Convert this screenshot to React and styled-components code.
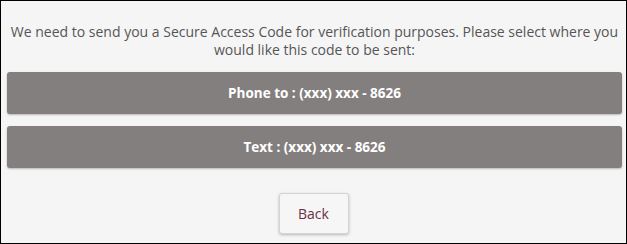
import React from "react";
import styled, { createGlobalStyle } from "styled-components";

const GlobalStyle = createGlobalStyle`
  body {
    margin: 0;
    font-family: "Open Sans", "Liberation Sans", sans-serif;
  }
`;

const Panel = styled.div`
  box-sizing: border-box;
  width: 627px;
  height: 244px;
  border: 1px solid #000;
  background: #f5f5f5;
  padding: 22px 4px 0 6px;
  display: flex;
  flex-direction: column;
  align-items: stretch;
`;

const Message = styled.p`
  margin: 0 0 13px;
  font-size: 14px;
  line-height: 18px;
  color: #555;
  text-align: center;
`;

const OptionList = styled.div`
  display: flex;
  flex-direction: column;
  gap: 12px;
`;

const OptionButton = styled.button`
  height: 42px;
  border: none;
  border-radius: 3px;
  background: #847f7f;
  color: #fff;
  font-family: inherit;
  font-size: 13.5px;
  font-weight: 700;
  box-shadow: 0 1px 2px rgba(0, 0, 0, 0.25);
  cursor: pointer;
`;

const Footer = styled.div`
  display: flex;
  justify-content: center;
  padding-top: 25px;
  padding-right: 2px;
`;

const BackButton = styled.button`
  width: 70px;
  height: 41px;
  border: 1px solid #d4d4d4;
  border-radius: 3px;
  background: #f6f6f6;
  color: #6e2f42;
  font-family: inherit;
  font-size: 14px;
  box-shadow: 0 1px 3px rgba(0, 0, 0, 0.25);
  cursor: pointer;
`;

const options = ["Phone to : (xxx) xxx - 8626", "Text : (xxx) xxx - 8626"];

export default function App() {
  return (
    <>
      <GlobalStyle />
      <Panel>
        <Message>
          We need to send you a Secure Access Code for verification purposes. Please select where you
          <br />
          would like this code to be sent:
        </Message>
        <OptionList>
          {options.map(label => (
            <OptionButton key={label}>{label}</OptionButton>
          ))}
        </OptionList>
        <Footer>
          <BackButton>Back</BackButton>
        </Footer>
      </Panel>
    </>
  );
}
